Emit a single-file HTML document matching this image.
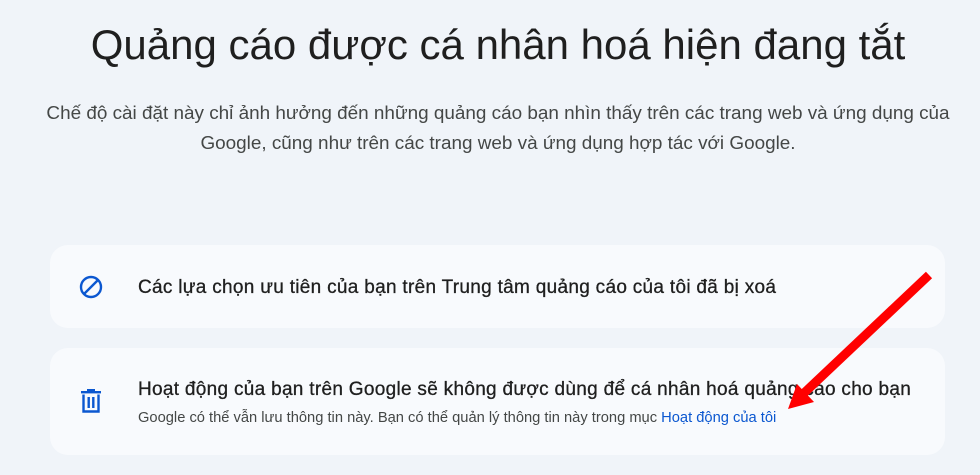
<!DOCTYPE html>
<html><head><meta charset="utf-8"><style>
*{margin:0;padding:0;box-sizing:border-box}
body{width:980px;height:475px;background:#f0f4f9;font-family:"Liberation Sans",sans-serif;color:#1f1f1f;position:relative;overflow:hidden}
h1{position:absolute;top:21px;left:8px;width:980px;text-align:center;font-weight:400;font-size:42px;color:#1f1f1f;white-space:nowrap}
.sub{position:absolute;top:99px;left:8px;width:980px;text-align:center;font-size:18.9px;line-height:30px;color:#444746;white-space:nowrap}
.card{position:absolute;left:50px;width:895px;background:#f8fafd;border-radius:18px}
.t{position:absolute;left:88px;font-size:19px;letter-spacing:0.3px;color:#1f1f1f;-webkit-text-stroke:0.3px #1f1f1f;white-space:nowrap}
.s{position:absolute;left:88px;font-size:14.7px;color:#444746;white-space:nowrap}
.s a{color:#0b57d0;text-decoration:none}
svg.ic{position:absolute}
</style></head><body>
<h1>Quảng cáo được cá nhân hoá hiện đang tắt</h1>
<div class="sub">Chế độ cài đặt này chỉ ảnh hưởng đến những quảng cáo bạn nhìn thấy trên các trang web và ứng dụng của<br>Google, cũng như trên các trang web và ứng dụng hợp tác với Google.</div>
<div class="card" style="top:245px;height:83px">
<svg class="ic" style="left:29px;top:30px" width="24" height="24" viewBox="0 0 24 24"><circle cx="12" cy="12" r="10" fill="none" stroke="#0b57d0" stroke-width="2.4"/><line x1="5" y1="19" x2="19" y2="5" stroke="#0b57d0" stroke-width="2.4"/></svg>
<div class="t" style="top:32px">Các lựa chọn ưu tiên của bạn trên Trung tâm quảng cáo của tôi đã bị xoá</div>
</div>
<div class="card" style="top:348px;height:107px">
<svg class="ic" style="left:30px;top:41px" width="22" height="24" viewBox="0 0 22 24"><rect x="1" y="2" width="20" height="2.4" fill="#0b57d0"/><rect x="7" y="0" width="8" height="3" fill="#0b57d0"/><path d="M3.5 5.5V22.5H18.5V5.5" fill="none" stroke="#0b57d0" stroke-width="2.4"/><rect x="7.5" y="8" width="2.4" height="11" fill="#0b57d0"/><rect x="12.1" y="8" width="2.4" height="11" fill="#0b57d0"/></svg>
<div class="t" style="top:31px">Hoạt động của bạn trên Google sẽ không được dùng để cá nhân hoá quảng cáo cho bạn</div>
<div class="s" style="top:62px">Google có thể vẫn lưu thông tin này. Bạn có thể quản lý thông tin này trong mục <a>Hoạt động của tôi</a></div>
</div>
<svg style="position:absolute;left:0;top:0" width="980" height="475"><line x1="929" y1="275" x2="803" y2="394" stroke="#f00" stroke-width="9"/><polygon points="788,409 797,384 814,402" fill="#f00"/></svg>
</body></html>
